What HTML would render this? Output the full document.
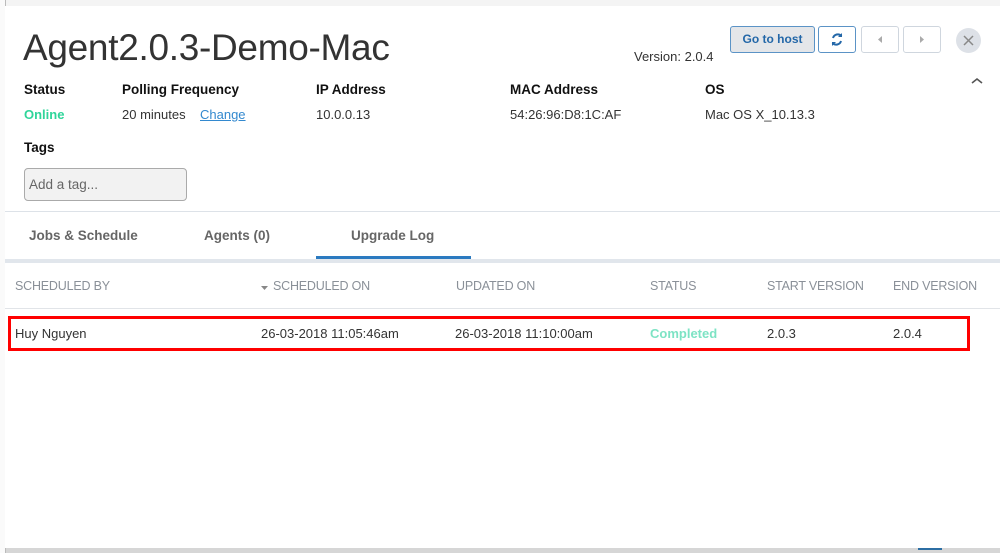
<!DOCTYPE html>
<html><head><style>
body{margin:0;width:1000px;height:553px;overflow:hidden;background:#d6d6d6;font-family:"Liberation Sans",sans-serif;position:relative}
.a{position:absolute;white-space:nowrap}
.bg{background:#f4f4f4}
.m{position:absolute;left:5px;top:6px;width:995px;height:542px;background:#fff}
.lb{font-weight:bold;font-size:13.5px;color:#111}
.v{font-size:13px;color:#333}
.h{font-size:12.5px;color:#8a9098;letter-spacing:-0.2px}
.btn{position:absolute;top:26px;height:27px;border:1px solid #cfd6de;border-radius:3px;background:#fff;box-sizing:border-box}
</style></head><body>
<div class="a bg" style="left:0;top:0;width:1000px;height:6px;border-bottom:1px solid #ccc"></div>
<div class="a" style="left:0;top:0;width:5px;height:553px;background:#fafafa;border-right:1px solid #bbb"></div>
<div class="a" style="left:918px;top:547px;width:24px;height:3px;background:#2c6ea3"></div>
<div class="m"></div>
<div class="a" style="left:23px;top:27px;font-size:37px;font-weight:300;color:#333;letter-spacing:-0.3px">Agent2.0.3-Demo-Mac</div>
<div class="a v" style="left:634px;top:49px">Version: 2.0.4</div>
<div class="btn" style="left:730px;width:85px;background:#e4e6e9;border-color:#5b93c6;font-weight:bold;font-size:12px;color:#2367a8;text-align:center;line-height:25px">Go to host</div>
<div class="btn" style="left:818px;width:38px;border-color:#5b93c6"><svg width="36" height="25"><g fill="none" stroke="#2367a8" stroke-width="2"><path d="M14 11a5 5 0 0 1 8.5-2"/><path d="M22 14a5 5 0 0 1-8.5 2"/></g><path d="M23 6v4h-4z M13 19v-4h4z" fill="#2367a8"/></svg></div>
<div class="btn" style="left:861px;width:38px"><svg width="36" height="25"><path d="M20 9v7l-4-3.5z" fill="#aaa"/></svg></div>
<div class="btn" style="left:903px;width:38px"><svg width="36" height="25"><path d="M16 9v7l4-3.5z" fill="#aaa"/></svg></div>
<div class="a" style="left:956px;top:28px;width:25px;height:25px;border-radius:50%;background:#dde1e7"><svg width="25" height="25"><path d="M8 8l9 9M17 8l-9 9" stroke="#888" stroke-width="1.5"/></svg></div>
<svg class="a" style="left:970px;top:76px" width="14" height="10"><path d="M2 7l5-4 5 4" fill="none" stroke="#555" stroke-width="1.6"/></svg>
<div class="a lb" style="left:24px;top:82px">Status</div>
<div class="a lb" style="left:122px;top:82px">Polling Frequency</div>
<div class="a lb" style="left:316px;top:82px">IP Address</div>
<div class="a lb" style="left:510px;top:82px">MAC Address</div>
<div class="a lb" style="left:705px;top:82px">OS</div>
<div class="a" style="left:24px;top:107px;font-size:13px;font-weight:bold;color:#2fd59a">Online</div>
<div class="a v" style="left:122px;top:107px">20 minutes</div>
<div class="a" style="left:200px;top:107px;font-size:13px;color:#3389cf;text-decoration:underline">Change</div>
<div class="a v" style="left:316px;top:107px">10.0.0.13</div>
<div class="a v" style="left:510px;top:107px">54:26:96:D8:1C:AF</div>
<div class="a v" style="left:705px;top:107px">Mac OS X_10.13.3</div>
<div class="a lb" style="left:24px;top:140px">Tags</div>
<div class="a" style="left:24px;top:168px;width:163px;height:33px;box-sizing:border-box;border:1px solid #aaa;border-radius:4px;background:#f2f2f2;font-size:13.5px;color:#666;line-height:31px;padding-left:4px">Add a tag...</div>
<div class="a" style="left:5px;top:211px;width:995px;height:1px;background:#dde2e8"></div>
<div class="a" style="left:29px;top:228px;font-size:13.5px;font-weight:bold;color:#666">Jobs &amp; Schedule</div>
<div class="a" style="left:204px;top:228px;font-size:13.5px;font-weight:bold;color:#666">Agents (0)</div>
<div class="a" style="left:351px;top:228px;font-size:13.5px;font-weight:bold;color:#666">Upgrade Log</div>
<div class="a" style="left:5px;top:259px;width:995px;height:4px;background:#e1e6ec"></div>
<div class="a" style="left:316px;top:256px;width:155px;height:3px;background:#2b7ac0"></div>
<div class="a h" style="left:15px;top:279px">SCHEDULED BY</div>
<svg class="a" style="left:261px;top:285px" width="8" height="6"><path d="M0 1h7l-3.5 4z" fill="#888"/></svg>
<div class="a h" style="left:273px;top:279px">SCHEDULED ON</div>
<div class="a h" style="left:456px;top:279px">UPDATED ON</div>
<div class="a h" style="left:650px;top:279px">STATUS</div>
<div class="a h" style="left:767px;top:279px">START VERSION</div>
<div class="a h" style="left:893px;top:279px">END VERSION</div>
<div class="a" style="left:5px;top:308px;width:995px;height:1px;background:#e1e4e8"></div>
<div class="a" style="left:8px;top:316px;width:962px;height:35px;box-sizing:border-box;border:3px solid #f00"></div>
<div class="a v" style="left:15px;top:326px">Huy Nguyen</div>
<div class="a v" style="left:261px;top:326px">26-03-2018 11:05:46am</div>
<div class="a v" style="left:455px;top:326px">26-03-2018 11:10:00am</div>
<div class="a" style="left:650px;top:326px;font-size:13px;font-weight:bold;color:#7de3c4">Completed</div>
<div class="a v" style="left:767px;top:326px">2.0.3</div>
<div class="a v" style="left:893px;top:326px">2.0.4</div>
</body></html>
